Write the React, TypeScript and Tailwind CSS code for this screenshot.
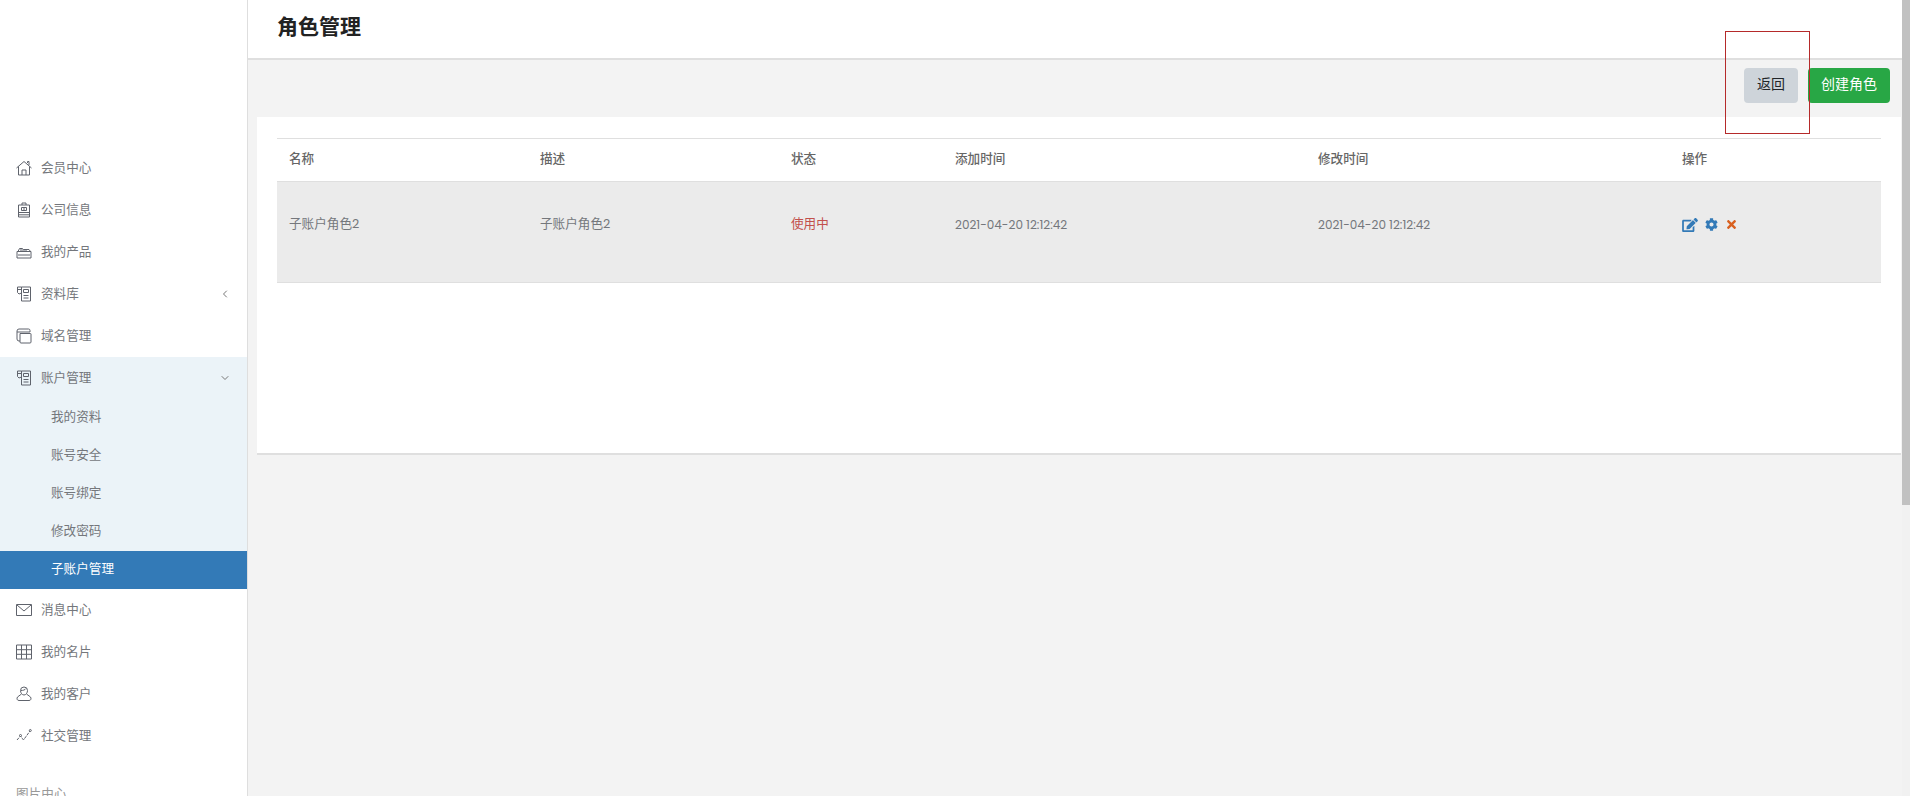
import { ChevronDown, ChevronLeft } from 'lucide-react'
import type { ReactNode } from 'react'
import { FaCog, FaEdit, FaTimes } from 'react-icons/fa'

const fontStack = "font-['Poppins','Liberation_Sans','Noto_Sans_CJK_SC',sans-serif]"

function LineIcon({ children }: { children: ReactNode }) {
  return (
    <svg viewBox="0 0 16 16" className="h-4 w-4 text-[#5f636c]" fill="none" stroke="currentColor" strokeWidth="1">
      {children}
    </svg>
  )
}

const HomeIcon = () => (
  <LineIcon>
    <path d="M.5 8 8 1.500 15.500 8M11.500 3V1.500h1.500v3.500M2.500 6.500V15h11V6.500M6 15v-5h4v5" />
  </LineIcon>
)
const OfficeIcon = () => (
  <LineIcon>
    <path d="M2.500 3h11v12h-11zM6 3V1h4v2M2.500 10.500h11M2.500 12.800h11M5.500 5.500h5v3h-5zM8 5.500v3" />
  </LineIcon>
)
const BoxIcon = () => (
  <LineIcon>
    <path d="M1 7.500h14V14H1zM2 7.500 3.500 4.500h3l1 1h5.500l1.500 2M4 6h7M2 11h12" />
  </LineIcon>
)
const BookIcon = () => (
  <LineIcon>
    <path d="M5.500 1h9v14h-9zM1.500 1h4M1.500 3.500h4M1.500 1v5.500L3 8l2.500-1M7.500 3.500h5v3h-5zM7.500 9.500h5M7.500 12h5" />
  </LineIcon>
)
const LayersIcon = () => (
  <LineIcon>
    <path d="M3 1h9.500A1.500 1.500 0 0 1 14 2.500V4H1V3a2 2 0 0 1 2-2ZM1 4v7a2 2 0 0 0 2 2h1M4 5.500h10.500a.5.500 0 0 1 .5.5v8a1 1 0 0 1-1 1H5a1 1 0 0 1-1-1V5.500Z" />
  </LineIcon>
)
const MailIcon = () => (
  <LineIcon>
    <path d="M.5 2.500h15v11H.5zM1 3l7 6 7-6" />
  </LineIcon>
)
const GridIcon = () => (
  <LineIcon>
    <path d="M.5 1h15v14H.5zM.5 5.700h15M.5 10.300h15M5.500 1v14M10.500 1v14" />
  </LineIcon>
)
const UserIcon = () => (
  <LineIcon>
    <path d="M8 1a3.500 3.500 0 0 1 3.500 3.500C11.500 6.800 10 9 8 9S4.500 6.800 4.500 4.500A3.500 3.500 0 0 1 8 1ZM5.500 8 1.500 11c-1 1.500-.5 3.500 1.500 3.500h10c2 0 2.500-2 1.500-3.500l-4-3" />
    <path d="M5 4.500c2 0 4-.5 5-2" />
  </LineIcon>
)
const ChartIcon = () => (
  <LineIcon>
    <path d="M1 12l3.500-4 3 4L14 3" strokeDasharray="3 1" />
    <circle cx="14.300" cy="2.500" r="1" />
    <circle cx="4.500" cy="7.500" r="1" />
  </LineIcon>
)

function SideItem({ icon, label, trailing, tinted }: { icon: ReactNode; label: string; trailing?: ReactNode; tinted?: boolean }) {
  return (
    <div className={`flex h-[42px] items-center pl-4 pr-[16px] text-[12.600px] text-[#74777c] ${tinted ? 'bg-[#ebf3f8]' : ''}`}>
      <span className="flex w-[25px] shrink-0">{icon}</span>
      <span className="flex-1">{label}</span>
      {trailing}
    </div>
  )
}

function SubItem({ label, active }: { label: string; active?: boolean }) {
  return (
    <div className={`flex h-[38px] items-center pb-[2px] pl-[51px] text-[12.600px] ${active ? 'bg-[#337ab7] text-white' : 'text-[#74777c]'}`}>
      {label}
    </div>
  )
}

function Sidebar() {
  return (
    <aside className="h-full w-[248px] shrink-0 overflow-hidden border-r border-[#dedede] bg-white pt-[147px]">
      <SideItem icon={<HomeIcon />} label="会员中心" />
      <SideItem icon={<OfficeIcon />} label="公司信息" />
      <SideItem icon={<BoxIcon />} label="我的产品" />
      <SideItem icon={<BookIcon />} label="资料库" trailing={<ChevronLeft size={12} className="text-[#777]" />} />
      <SideItem icon={<LayersIcon />} label="域名管理" />
      <SideItem icon={<BookIcon />} label="账户管理" tinted trailing={<ChevronDown size={12} className="text-[#777]" />} />
      <div className="bg-[#ebf3f8]">
        <SubItem label="我的资料" />
        <SubItem label="账号安全" />
        <SubItem label="账号绑定" />
        <SubItem label="修改密码" />
        <SubItem label="子账户管理" active />
      </div>
      <SideItem icon={<MailIcon />} label="消息中心" />
      <SideItem icon={<GridIcon />} label="我的名片" />
      <SideItem icon={<UserIcon />} label="我的客户" />
      <SideItem icon={<ChartIcon />} label="社交管理" />
      <div className="mt-[28px] pl-4 text-[12.600px] text-[#999]">图片中心</div>
    </aside>
  )
}

function ActionIcons() {
  return (
    <div className="flex items-center">
      <FaEdit className="h-[14px] w-[16px] text-[#337ab7]" />
      <FaCog className="ml-[7px] h-[13px] w-[13px] text-[#337ab7]" />
      <FaTimes className="ml-[8px] h-[13px] w-[11px] text-[#d9601f]" />
    </div>
  )
}

const headerCells = [
  { label: '名称', width: 'w-[251px]' },
  { label: '描述', width: 'w-[251px]' },
  { label: '状态', width: 'w-[164px]' },
  { label: '添加时间', width: 'w-[363px]' },
  { label: '修改时间', width: 'w-[364px]' },
  { label: '操作', width: 'flex-1' },
]

export default function App() {
  return (
    <div className={`relative flex h-[796px] w-[1910px] overflow-hidden bg-[#f3f3f3] ${fontStack}`}>
      <Sidebar />
      <main className="flex min-w-0 flex-1 flex-col">
        <header className="flex h-[60px] shrink-0 items-center border-b-2 border-[#dfdfdf] bg-white pb-[5px] pl-[29px]">
          <h1 className="text-[21px] font-bold text-[#222]">角色管理</h1>
        </header>
        <div className="flex h-[57px] shrink-0 items-start justify-end gap-[10px] pr-[20px] pt-[8px]">
          <button className="h-[35px] w-[54px] rounded-[4px] bg-[#ced4da] pb-[2px] text-[14px] text-[#212529]">返回</button>
          <button className="h-[35px] w-[82px] rounded-[4px] bg-[#28a745] pb-[2px] text-[14px] text-white">创建角色</button>
        </div>
        <section className="mx-[9px] h-[338px] border-b-2 border-[#dfdfdf] bg-white px-5 pt-[21px]">
          <div className="flex h-[43px] items-center border-t border-[#dfdfdf] pb-[1px] pl-3 text-[12.600px] font-medium text-[#666]">
            {headerCells.map((cell) => (
              <span key={cell.label} className={cell.width}>{cell.label}</span>
            ))}
          </div>
          <div className="flex h-[102px] items-center border-y border-[#dfdfdf] bg-[#ebebeb] pb-[15px] pl-3 text-[12.600px] text-[#74777c]">
            <span className="w-[251px]">子账户角色2</span>
            <span className="w-[251px]">子账户角色2</span>
            <span className="w-[164px] text-[#c2504c]">使用中</span>
            <span className="w-[363px] text-[12px]">2021-04-20 12:12:42</span>
            <span className="w-[364px] text-[12px]">2021-04-20 12:12:42</span>
            <ActionIcons />
          </div>
        </section>
      </main>
      {/* scrollbar sits on top of the content */}
      <div className="absolute right-0 top-0 h-full w-[8px] bg-[#f1f1f1]">
        <div className="h-[505px] bg-[#c1c1c1]" />
      </div>
      {/* red annotation drawn over the screenshot */}
      <div className="absolute left-[1725px] top-[31px] h-[103px] w-[85px] border border-[#b52a2a]" />
    </div>
  )
}
